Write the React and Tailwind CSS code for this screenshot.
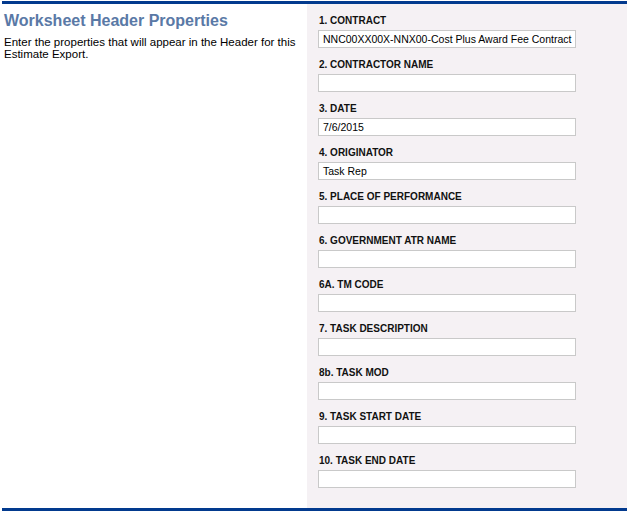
import React from 'react';

// --- DỮ LIỆU CÁC TRƯỜNG ---
const fields = [
    { label: '1. CONTRACT', value: 'NNC00XX00X-NNX00-Cost Plus Award Fee Contract' },
    { label: '2. CONTRACTOR NAME', value: '' },
    { label: '3. DATE', value: '7/6/2015' },
    { label: '4. ORIGINATOR', value: 'Task Rep' },
    { label: '5. PLACE OF PERFORMANCE', value: '' },
    { label: '6. GOVERNMENT ATR NAME', value: '' },
    { label: '6A. TM CODE', value: '' },
    { label: '7. TASK DESCRIPTION', value: '' },
    { label: '8b. TASK MOD', value: '' },
    { label: '9. TASK START DATE', value: '' },
    { label: '10. TASK END DATE', value: '' },
];

const font = { fontFamily: '"Liberation Sans", Arial, sans-serif' };

const App = () => {
    return (
        <div className="bg-white w-[630px] h-[511px]" style={font}>
            <div className="ml-[2px] mt-[1px] w-[625px] h-[510px] border-t-[3px] border-b-[3px] border-[#023a8e] flex">
                {/* --- CỘT TRÁI --- */}
                <div className="w-[305px] pl-[2px] pt-[7px]">
                    <h1 className="text-[16px] leading-[20px] font-bold text-[#5a79a6]">Worksheet Header Properties</h1>
                    <p className="mt-[5px] text-[11.5px] leading-[12px] text-black">
                        Enter the properties that will appear in the Header for this Estimate Export.
                    </p>
                </div>

                {/* --- CỘT PHẢI: CÁC TRƯỜNG --- */}
                <div className="flex-1 bg-[#f5f1f4] pl-[11px] pt-[10px]">
                    {fields.map((f) => (
                        <div key={f.label} className="mb-[10px]">
                            <div className="text-[10px] leading-[14px] font-bold text-[#111] pl-[1px] whitespace-nowrap">{f.label}</div>
                            <div className="mt-[2px] w-[258px] h-[18px] bg-white border border-[#c9c9c9] px-[4px] text-[10.5px] leading-[16px] text-black whitespace-nowrap overflow-hidden">
                                {f.value}
                            </div>
                        </div>
                    ))}
                </div>
            </div>
        </div>
    );
};

export default App;
